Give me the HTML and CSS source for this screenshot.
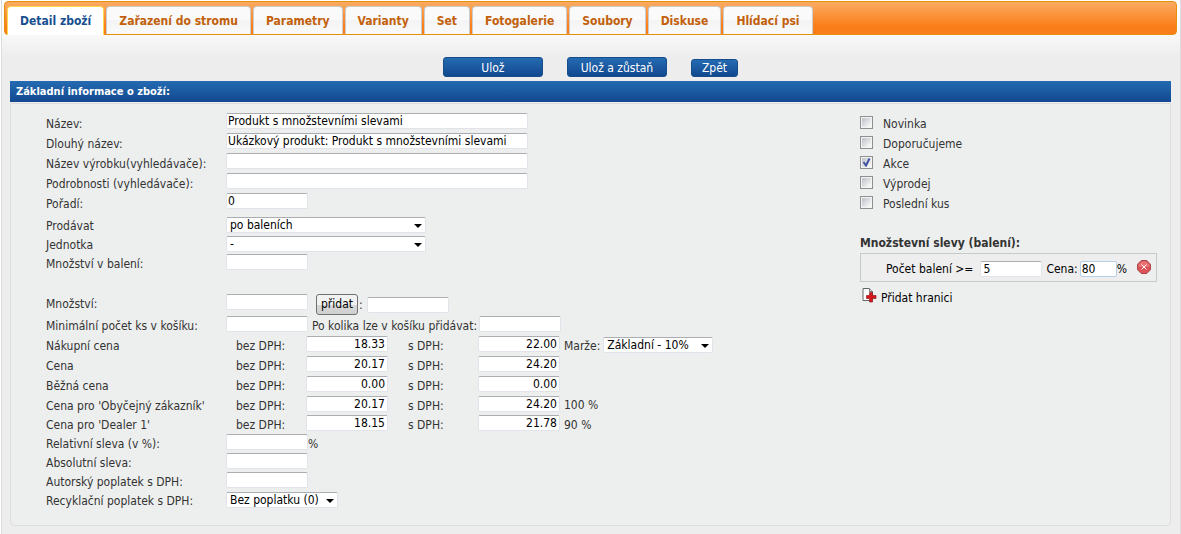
FILE: index.html
```html
<!DOCTYPE html>
<html lang="cs">
<head>
<meta charset="utf-8">
<title>Detail zboží</title>
<link rel="stylesheet" href="styles.css">
</head>
<body>
<main class="page">
  <nav class="tabs">
    <a class="tab active" href="#detail">Detail zboží</a>
    <a class="tab" href="#strom">Zařazení do stromu</a>
    <a class="tab" href="#parametry">Parametry</a>
    <a class="tab" href="#varianty">Varianty</a>
    <a class="tab" href="#set">Set</a>
    <a class="tab" href="#foto">Fotogalerie</a>
    <a class="tab" href="#soubory">Soubory</a>
    <a class="tab" href="#diskuse">Diskuse</a>
    <a class="tab" href="#psi">Hlídací psi</a>
  </nav>
  <form class="content">
    <div class="actions">
      <button class="action wide" type="button">Ulož</button>
      <button class="action wide" type="button">Ulož a zůstaň</button>
      <button class="action" type="button">Zpět</button>
    </div>
    <h2 class="panel-title">Základní informace o zboží:</h2>
    <div class="panel">
      <div class="fields">
        <div class="group">
          <div class="row"><label class="name" for="nazev">Název:</label><input class="long" id="nazev" type="text" value="Produkt s množstevními slevami"></div>
          <div class="row"><label class="name" for="dlouhy">Dlouhý název:</label><input class="long" id="dlouhy" type="text" value="Ukázkový produkt: Produkt s množstevními slevami"></div>
          <div class="row"><label class="name" for="vyrobek">Název výrobku(vyhledávače):</label><input class="long" id="vyrobek" type="text"></div>
          <div class="row"><label class="name" for="podrobnosti">Podrobnosti (vyhledávače):</label><input class="long" id="podrobnosti" type="text"></div>
          <div class="row"><label class="name" for="poradi">Pořadí:</label><input id="poradi" type="text" value="0"></div>
        </div>
        <div class="group compact units">
          <div class="row"><label class="name" for="prodavat">Prodávat</label><select class="medium" id="prodavat"><option>po baleních</option></select></div>
          <div class="row"><label class="name" for="jednotka">Jednotka</label><select class="medium" id="jednotka"><option>-</option></select></div>
          <div class="row"><label class="name" for="vbaleni">Množství v balení:</label><input id="vbaleni" type="text"></div>
        </div>
        <div class="group prices">
          <div class="row stock"><label class="name" for="mnozstvi">Množství:</label><input id="mnozstvi" type="text"><button class="add" type="button">přidat</button><label class="colon" for="pridat">:</label><input class="lower" id="pridat" type="text"></div>
          <div class="row"><label class="name" for="minks">Minimální počet ks v košíku:</label><input id="minks" type="text"><label class="step" for="krok">Po kolika lze v košíku přidávat:</label><input id="krok" type="text"></div>
          <div class="row"><span class="name">Nákupní cena</span><label class="net" for="n1">bez DPH:</label><input class="num" id="n1" type="text" value="18.33"><label class="gross" for="g1">s DPH:</label><input class="num" id="g1" type="text" value="22.00"><label class="after" for="marze">Marže:</label><select class="margin" id="marze"><option>Základní - 10%</option></select></div>
          <div class="row"><span class="name">Cena</span><label class="net" for="n2">bez DPH:</label><input class="num" id="n2" type="text" value="20.17"><label class="gross" for="g2">s DPH:</label><input class="num" id="g2" type="text" value="24.20"></div>
          <div class="row"><span class="name">Běžná cena</span><label class="net" for="n3">bez DPH:</label><input class="num" id="n3" type="text" value="0.00"><label class="gross" for="g3">s DPH:</label><input class="num" id="g3" type="text" value="0.00"></div>
          <div class="row"><span class="name">Cena pro 'Obyčejný zákazník'</span><label class="net" for="n4">bez DPH:</label><input class="num" id="n4" type="text" value="20.17"><label class="gross" for="g4">s DPH:</label><input class="num" id="g4" type="text" value="24.20"><span class="after">100 %</span></div>
        </div>
        <div class="group compact">
          <div class="row"><span class="name">Cena pro 'Dealer 1'</span><label class="net" for="n5">bez DPH:</label><input class="num" id="n5" type="text" value="18.15"><label class="gross" for="g5">s DPH:</label><input class="num" id="g5" type="text" value="21.78"><span class="after">90 %</span></div>
          <div class="row"><label class="name" for="rel">Relativní sleva (v %):</label><input id="rel" type="text"><span>%</span></div>
          <div class="row"><label class="name" for="abs">Absolutní sleva:</label><input id="abs" type="text"></div>
          <div class="row"><label class="name" for="autor">Autorský poplatek s DPH:</label><input id="autor" type="text"></div>
          <div class="row"><label class="name" for="recykl">Recyklační poplatek s DPH:</label><select class="fee" id="recykl"><option>Bez poplatku (0)</option></select></div>
        </div>
      </div>
      <div class="side">
        <label class="check"><input type="checkbox">Novinka</label>
        <label class="check"><input type="checkbox">Doporučujeme</label>
        <label class="check"><input type="checkbox" checked>Akce</label>
        <label class="check"><input type="checkbox">Výprodej</label>
        <label class="check"><input type="checkbox">Poslední kus</label>
        <h3 class="discount-title">Množstevní slevy (balení):</h3>
        <div class="discount">
          <label for="pocet">Počet balení &gt;=</label><input class="count" id="pocet" type="text" value="5">
          <label class="price-label" for="cena">Cena:</label><input class="price" id="cena" type="text" value="80"><span>%</span>
          <button class="remove" type="button" aria-label="Odstranit">
            <svg width="14" height="14" viewBox="0 0 14 14"><path d="M4.300.5h5.400l3.800 3.800v5.400l-3.800 3.800H4.300L.5 9.700V4.300z" fill="#dc5257" stroke="#a8474b"/><path d="M4.700 1.500h4.600l3.200 3.200v2.300H1.500V4.700z" fill="#ee8585" opacity=".65"/><path d="M4.500 4.500l5 5m0-5l-5 5" stroke="#fff" stroke-width="1"/></svg>
          </button>
        </div>
        <a class="add-limit" href="#pridat-hranici">
          <svg width="15" height="15" viewBox="0 0 15 15"><path d="M1 .5h6.500L10.500 3.500V12.500H1z" fill="#fff" stroke="#666"/><path d="M7.500.5v3h3" fill="#ddd" stroke="#777"/><path d="M7.500 4.500h3v3H14v3h-3.500V14h-3v-3.500H4.500v-3h3z" fill="#d9161c" stroke="#8e2023" stroke-width=".7"/></svg>Přidat hranici</a>
      </div>
    </div>
  </form>
</main>
</body>
</html>
```

FILE: styles.css
```css
* { box-sizing: border-box; }

body {
  margin: 0;
  background: #fff;
  color: #333;
  font: 12px/20px "DejaVu Sans Condensed", Tahoma, sans-serif;
}

input, select, button { font: inherit; color: #000; }

.page {
  min-height: 100vh;
  margin-left: 1px;
  padding: 1px 3px 7px 2px;
  border: solid #ddd;
  border-width: 0 1px;
  background: linear-gradient(#fff 0, #f8f8f8 35px, #ededed 57px);
}

.tabs {
  display: flex;
  gap: 2px;
  height: 34px;
  padding: 4px 2px 0;
  border: 1px solid #e78f08;
  border-radius: 4px;
  background: linear-gradient(#fbab63, #fa7f1a 75%);
}

.tab {
  padding: 0 12px;
  border: 1px solid #ccc;
  border-bottom: 0;
  border-radius: 4px 4px 0 0;
  background: linear-gradient(#fafafa 50%, #f4f4f4 50%, #fafafa);
  color: #c2600b;
  font-weight: bold;
  line-height: 28px;
  text-decoration: none;
  white-space: nowrap;
}

.tab.active {
  margin-bottom: -1px;
  border-color: #fbd850;
  background: #fff;
  color: #174f91;
}

.content { margin: 0 6px; }

.actions {
  display: flex;
  justify-content: center;
  align-items: flex-end;
  gap: 24px;
  padding: 22px 0 4px;
}

.action {
  height: 18px;
  padding: 0 10px;
  border: 1px solid #154c8b;
  border-radius: 3px;
  background: linear-gradient(#246bb2, #12488f);
  color: #fff;
  line-height: 16px;
}

.action.wide { width: 100px; height: 20px; padding: 0; line-height: 20px; }

.panel-title {
  margin: 0 0 1px;
  padding: 0 6px;
  background: linear-gradient(#246bb2, #12488f);
  color: #fff;
  font-size: 11px;
  line-height: 21px;
}

.panel {
  display: flex;
  justify-content: space-between;
  padding: 9px 13px 15px 35px;
  border: 1px solid #ddd;
  border-radius: 0 0 4px 4px;
  background: #edefee;
}

.row { display: flex; height: 20px; line-height: 22px; white-space: nowrap; }
.compact .row { height: 19px; line-height: 21px; }
.row .after { line-height: 20px; }
.row label.after { line-height: 22px; }
.units { padding: 3px 0 20px; }
.prices .row > input { margin-top: 1px; }
.prices .row.stock { height: 22px; }

.name { width: 180px; }
.net { width: 80px; padding-left: 10px; }
.gross { width: 90px; padding-left: 20px; }
.after { padding-left: 4px; }

input[type="text"], select {
  width: 82px;
  height: 16px;
  margin: 0;
  padding: 0 1px;
  border: 1px solid #e2e3ea;
  border-top-color: #abadb3;
  border-radius: 2px;
  background: #fff;
  line-height: 14px;
}

input.long { width: 302px; }
input.num { padding-right: 2px; text-align: right; }

select {
  margin-top: 1px;
  padding: 0 3px;
  appearance: none;
  background: #fff url("data:image/svg+xml,%3Csvg xmlns='http://www.w3.org/2000/svg' width='8' height='4'%3E%3Cpath d='M0 0h8L4 4z'/%3E%3C/svg%3E") no-repeat right 3px bottom 4px;
}

select.medium { width: 200px; }
select.margin { width: 110px; margin: 2px 0 0 3px; }
select.fee { width: 112px; }

.add {
  height: 21px;
  margin: 1px 1px 0 8px;
  padding: 0 4px;
  border: 1px solid #707070;
  border-radius: 3px;
  background: linear-gradient(#f2f2f2 50%, #d8d8d8 50%, #cfcfcf);
  line-height: 19px;
}

.colon { width: 8px; line-height: 24px; }
.prices .row > .lower { margin-top: 4px; }
.step { width: 171px; padding-left: 4px; }

.side { flex: 0 0 297px; }

.check {
  display: flex;
  align-items: flex-start;
  gap: 10px;
  height: 20px;
  line-height: 22px;
}

.check input {
  flex: none;
  width: 13px;
  height: 13px;
  margin: 3px 0 0;
  appearance: none;
  border: 1px solid #8e8f8f;
  outline: 1px solid #f4f4f4;
  outline-offset: -2px;
  background: linear-gradient(135deg, #c4c8ce 20%, #f6f6f6 80%);
}

.check input:checked {
  background: url("data:image/svg+xml,%3Csvg xmlns='http://www.w3.org/2000/svg' width='11' height='11'%3E%3Cpath d='M2.500 5l2.500 3.500L8.500 1.500' fill='none' stroke='%234054a0' stroke-width='2'/%3E%3C/svg%3E") no-repeat, linear-gradient(135deg, #c4c8ce 20%, #f6f6f6 80%);
}

.discount-title { margin: 20px 0 0; font-size: 12px; line-height: 20px; }

.discount {
  display: flex;
  align-items: center;
  height: 29px;
  padding: 2px 5px 0 25px;
  border: 1px solid #c8cac9;
  background: #eee;
  color: #000;
  white-space: nowrap;
}

.discount .count { width: 62px; margin: 0 4px 0 auto; padding-left: 2px; }
.discount .price { width: 37px; margin-left: 2px; border-color: #b5cfe7; }

.remove {
  display: flex;
  margin: -4px 0 0 10px;
  padding: 0;
  border: 0;
  background: none;
}

.add-limit {
  display: flex;
  gap: 4px;
  margin: 6px 0 0 2px;
  color: #000;
  text-decoration: none;
}
```
